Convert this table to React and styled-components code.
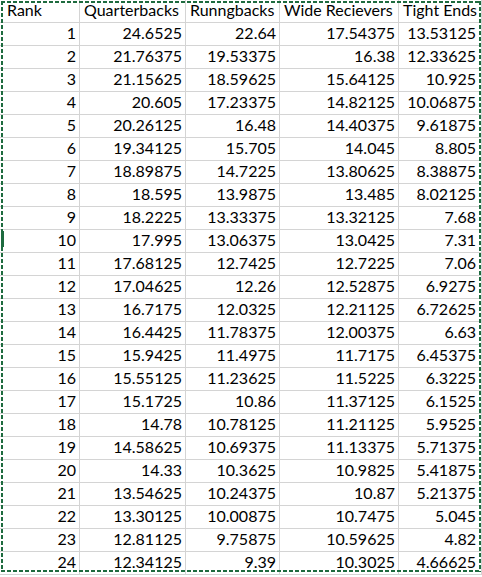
import React from "react";
import styled, { createGlobalStyle } from "styled-components";

const Global = createGlobalStyle`
  html, body { margin: 0; padding: 0; background: #ffffff; }
  body { font-family: Lato, "Liberation Sans", sans-serif; }
`;

const headers = ["Rank", "Quarterbacks", "Runngbacks", "Wide Recievers", "Tight Ends"];
const rows = [
  [1, "24.6525", "22.64", "17.54375", "13.53125"],
  [2, "21.76375", "19.53375", "16.38", "12.33625"],
  [3, "21.15625", "18.59625", "15.64125", "10.925"],
  [4, "20.605", "17.23375", "14.82125", "10.06875"],
  [5, "20.26125", "16.48", "14.40375", "9.61875"],
  [6, "19.34125", "15.705", "14.045", "8.805"],
  [7, "18.89875", "14.7225", "13.80625", "8.38875"],
  [8, "18.595", "13.9875", "13.485", "8.02125"],
  [9, "18.2225", "13.33375", "13.32125", "7.68"],
  [10, "17.995", "13.06375", "13.0425", "7.31"],
  [11, "17.68125", "12.7425", "12.7225", "7.06"],
  [12, "17.04625", "12.26", "12.52875", "6.9275"],
  [13, "16.7175", "12.0325", "12.21125", "6.72625"],
  [14, "16.4425", "11.78375", "12.00375", "6.63"],
  [15, "15.9425", "11.4975", "11.7175", "6.45375"],
  [16, "15.55125", "11.23625", "11.5225", "6.3225"],
  [17, "15.1725", "10.86", "11.37125", "6.1525"],
  [18, "14.78", "10.78125", "11.21125", "5.9525"],
  [19, "14.58625", "10.69375", "11.13375", "5.71375"],
  [20, "14.33", "10.3625", "10.9825", "5.41875"],
  [21, "13.54625", "10.24375", "10.87", "5.21375"],
  [22, "13.30125", "10.00875", "10.7475", "5.045"],
  [23, "12.81125", "9.75875", "10.59625", "4.82"],
  [24, "12.34125", "9.39", "10.3025", "4.66625"],
];

const Sheet = styled.div`
  position: relative;
  width: 482px;
  height: 577px;
  overflow: hidden;
`;

const Grid = styled.div`
  display: grid;
  grid-template-columns: 80px 106px 94px 119px 83px;
  grid-auto-rows: 23px;
  margin-top: -1px;
  margin-left: -1px;
  border-top: 1px solid #d4d4d4;
  border-left: 1px solid #d4d4d4;
  width: max-content;
`;

const Cell = styled.div`
  box-sizing: border-box;
  border-right: 1px solid #d4d4d4;
  border-bottom: 1px solid #d4d4d4;
  padding: 0 ${(p) => (p.$last ? "5px" : "3px")} 3px ${(p) => (p.$first ? "7px" : "4px")};
  display: flex;
  align-items: flex-end;
  justify-content: ${(p) => (p.$num ? "flex-end" : "flex-start")};
  font-size: 16px;
  line-height: 18px;
  color: #000;
  white-space: nowrap;
  overflow: hidden;
`;

const Marquee = styled.div`
  position: absolute;
  left: 1px;
  top: 1px;
  width: 480px;
  height: 571px;
  pointer-events: none;
  background:
    linear-gradient(#1e6b3f, #1e6b3f) 0 230px / 3px 16px no-repeat,
    repeating-linear-gradient(90deg, #1e6b3f 0 4px, transparent 4px 6px) top left / 100% 2px no-repeat,
    repeating-linear-gradient(90deg, #1e6b3f 0 4px, transparent 4px 6px) bottom left / 100% 2px no-repeat,
    repeating-linear-gradient(180deg, #1e6b3f 0 4px, transparent 4px 6px) top left / 2px 100% no-repeat,
    repeating-linear-gradient(180deg, #1e6b3f 0 4px, transparent 4px 6px) top right / 2px 100% no-repeat;
`;

export default function App() {
  return (
    <>
      <Global />
      <Sheet>
        <Grid>
          {headers.map((h, i) => (
            <Cell key={h} $first={i === 0} $last={i === 4}>
              {h}
            </Cell>
          ))}
          {rows.map((r) =>
            r.map((v, i) => (
              <Cell key={r[0] + "-" + i} $num $last={i === 4}>
                {v}
              </Cell>
            ))
          )}
        </Grid>
        <Marquee />
      </Sheet>
    </>
  );
}
